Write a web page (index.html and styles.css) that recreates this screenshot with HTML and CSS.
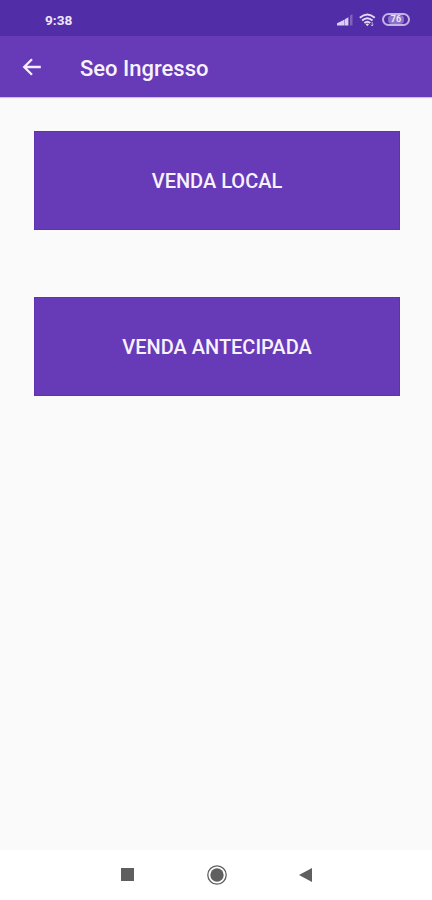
FILE: index.html
```html
<!DOCTYPE html>
<html lang="pt-BR">
<head>
    <meta charset="UTF-8">
    <meta name="viewport" content="width=device-width, initial-scale=1.0">
    <title>Seo Ingresso</title>
    <link rel="stylesheet" href="styles.css">
</head>
<body>

    <div class="status-bar">
        <span class="clock">9:38</span>
        <div class="status-icons">
            <svg class="signal" width="16" height="12" viewBox="0 0 16 12">
                <path d="M0 11.5V9.2L3.7 7.6V11.5Z M3.7 11.5V7.6L7.5 5.5V11.5Z M7.9 11.5V5.3L11.4 3.3V11.5Z" fill="#d9cdf0"/>
                <path d="M13 11.5V1.5L15.5 0V11.5Z" fill="#7f62c0"/>
            </svg>
            <svg class="wifi" width="17" height="14" viewBox="0 0 17 14">
                <g fill="none" stroke="#e3d9f5" stroke-width="1.9">
                    <path d="M0.8 4.8Q8.3-1.8 15.8 4.8"/>
                    <path d="M3.1 7.5Q8.3 2.9 13.5 7.5"/>
                    <path d="M5.4 10Q8.3 7.3 11.2 10"/>
                </g>
                <path d="M6.6 11.2Q8.3 9.8 10 11.2L8.3 13.2Z" fill="#e3d9f5"/>
                <path d="M13.2 9V13M12 11.7L13.2 13L14.4 11.7" fill="none" stroke="#cbbce8" stroke-width="0.9"/>
            </svg>
            <div class="battery"><span class="battery-level">76</span></div>
        </div>
    </div>

    <div class="app-bar">
        <svg class="back" width="20" height="20" viewBox="0 0 20 20">
            <path d="M18.8 10H2.6M10 2.2L2.2 10L10 17.8" fill="none" stroke="#f4edff" stroke-width="2.3"/>
        </svg>
        <h1 class="title">Seo Ingresso</h1>
    </div>

    <div class="content">
        <button class="btn">VENDA LOCAL</button>
        <button class="btn">VENDA ANTECIPADA</button>
    </div>

    <div class="nav-bar">
        <svg width="13" height="13" viewBox="0 0 13 13">
            <rect width="13" height="13" fill="#5f5f5f"/>
        </svg>
        <svg width="20" height="20" viewBox="0 0 20 20">
            <circle cx="10" cy="10" r="9.2" fill="none" stroke="#5f5f5f" stroke-width="1.3"/>
            <circle cx="10" cy="10" r="6.7" fill="#5f5f5f"/>
        </svg>
        <svg width="13" height="14" viewBox="0 0 13 14">
            <path d="M13 0V14L0 7Z" fill="#5f5f5f"/>
        </svg>
    </div>

</body>
</html>
```

FILE: styles.css
```css
* {
    box-sizing: border-box;
}

body {
    margin: 0;
    height: 100vh;
    display: flex;
    flex-direction: column;
    background-color: #fafafa;
    font-family: Roboto, sans-serif;
    overflow: hidden;
}

.status-bar {
    height: 36px;
    padding: 3px 22px 0 45px;
    display: flex;
    align-items: center;
    justify-content: space-between;
    background-color: #512da8;
    color: #eee6fb;
}

.clock {
    padding-top: 1px;
    font-size: 13.7px;
    font-weight: 700;
    line-height: 16px;
}

.status-icons {
    display: flex;
    align-items: center;
    gap: 6px;
}

.battery {
    width: 28px;
    height: 13px;
    display: flex;
    align-items: center;
    justify-content: center;
    border: 2px solid #c4b4e6;
    border-radius: 7px;
}

.battery-level {
    padding: 0 3px;
    border-radius: 4px;
    background-color: #8c72c8;
    font-size: 9px;
    font-weight: 700;
    line-height: 9px;
}

.app-bar {
    height: 61px;
    padding: 0 22px;
    display: flex;
    align-items: center;
    gap: 38px;
    background-color: #673ab7;
    box-shadow: 0 1px 1px #cdbde8;
    color: #f8f2ff;
}

.title {
    margin: 5px 0 0;
    font-size: 22px;
    font-weight: 500;
    line-height: 28px;
}

.content {
    flex: 1;
    padding: 34px 32px 0 34px;
    display: flex;
    flex-direction: column;
    gap: 67px;
}

.btn {
    height: 99px;
    padding: 0;
    border: 1px solid #6032b2;
    background-color: #673ab7;
    color: #f8f2ff;
    font-family: inherit;
    font-size: 20px;
    font-weight: 500;
}

.nav-bar {
    height: 50px;
    padding: 0 120px 1px 121px;
    display: flex;
    align-items: center;
    justify-content: space-between;
    background-color: #fff;
}
```
